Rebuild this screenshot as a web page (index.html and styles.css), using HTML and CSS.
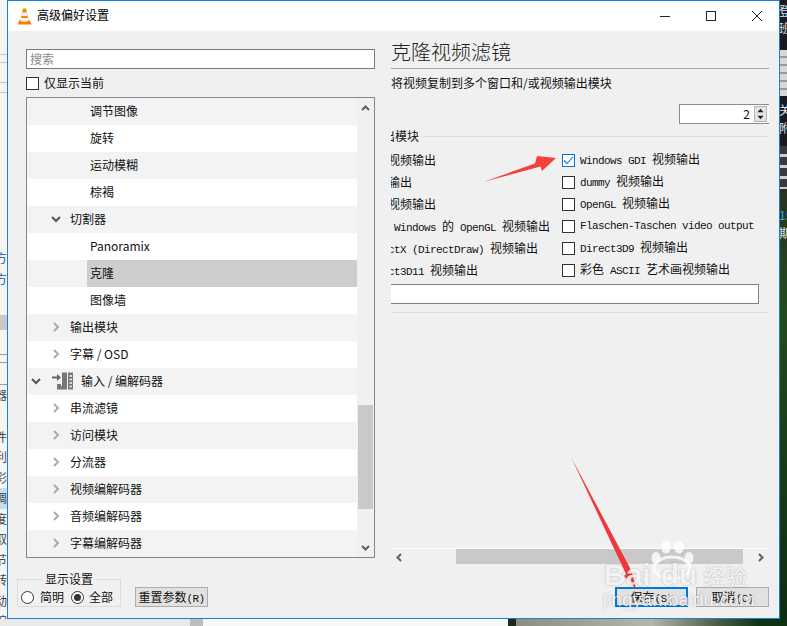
FILE: index.html
```html
<!DOCTYPE html>
<html lang="zh">
<head>
<meta charset="utf-8">
<title>高级偏好设置</title>
<link rel="stylesheet" href="styles.css">
</head>
<body>
<div class="desktop">
  <div class="strip-left">
    <div class="gap-54"></div><div class="hline"></div><div class="gap-7"></div><div class="hline"></div><div class="gap-19"></div><div class="hline"></div><div class="gap-9"></div><div class="hline"></div>
    <div class="gap-155"></div>
    <div class="bg-ch blue">方</div><div class="bg-ch blue">方</div>
    <div class="gap-26"></div>
    <div class="gray-block"></div>
    <div class="gap-24"></div><div class="hline dark"></div><div class="gap-7"></div><div class="hline dark"></div><div class="gap-21"></div><div class="hline dark"></div>
    <div class="bg-ch">器</div>
    <div class="gap-21"></div>
    <div class="bg-ch">件</div><div class="bg-ch">利</div><div class="bg-ch">彩</div><div class="bg-ch sel">调</div><div class="bg-ch">度</div><div class="bg-ch">取</div><div class="bg-ch">节</div><div class="bg-ch">转</div><div class="bg-ch">动</div><div class="bg-ch">编</div>
  </div>
  <div class="strip-right">
    <div class="sr-text">登<br>班</div>
    <div class="sr-bars"></div>
    <div class="sr-text sr-mid">关<br>附</div>
    <div class="sr-bars dark"></div>
    <div class="sr-green"><span class="sr-num">15</span><br>期</div>
  </div>
  <div class="strip-bottom">
    <div class="sb-a"></div><div class="sb-b"></div><div class="sb-c"></div><div class="sb-d"></div><div class="sb-e"></div>
  </div>

  <div class="window">
    <header class="titlebar">
      <svg class="cone" width="15" height="17" viewBox="0 0 15 17">
        <path d="M0.5 16.5 L2.5 12 H12.5 L14.5 16.5 Z" fill="#f08000"/>
        <path d="M6 0.5 H9 L11.8 13.5 Q7.5 15.5 3.2 13.5 Z" fill="#f28a00"/>
        <path d="M5.1 4.5 H9.9 L10.6 8 H4.4 Z" fill="#f4f4f4"/>
        <path d="M3.9 10 H11.1 L11.7 13 Q7.5 14.6 3.3 13 Z" fill="#f4f4f4"/>
      </svg>
      <span class="title-text">高级偏好设置</span>
      <div class="win-controls">
        <svg width="12" height="12" viewBox="0 0 12 12"><path d="M1 6.5 H11" stroke="#222" fill="none"/></svg>
        <svg width="12" height="12" viewBox="0 0 12 12"><rect x="1.5" y="1.5" width="9" height="9" stroke="#222" fill="none"/></svg>
        <svg width="12" height="12" viewBox="0 0 12 12"><path d="M1 1 L11 11 M11 1 L1 11" stroke="#222" fill="none"/></svg>
      </div>
    </header>

    <div class="body">
      <aside class="left">
        <div class="search">搜索</div>
        <label class="only-current"><span class="cb"></span><span class="oc-text">仅显示当前</span></label>
        <div class="tree">
          <div class="rows">
            <div class="row lvl3"><span class="lab">调节图像</span></div>
            <div class="row lvl3"><span class="lab">旋转</span></div>
            <div class="row lvl3"><span class="lab">运动模糊</span></div>
            <div class="row lvl3"><span class="lab">棕褐</span></div>
            <div class="row lvl2"><svg class="chev" width="10" height="10" viewBox="0 0 10 10"><path class="open" d="M1 3 L5 7 L9 3"/></svg><span>切割器</span></div>
            <div class="row lvl3"><span class="lab">Panoramix</span></div>
            <div class="row lvl3"><span class="lab selected">克隆</span></div>
            <div class="row lvl3"><span class="lab">图像墙</span></div>
            <div class="row lvl2"><svg class="chev" width="10" height="10" viewBox="0 0 10 10"><path d="M3 1 L7 5 L3 9"/></svg><span>输出模块</span></div>
            <div class="row lvl2"><svg class="chev" width="10" height="10" viewBox="0 0 10 10"><path d="M3 1 L7 5 L3 9"/></svg><span>字幕 / OSD</span></div>
            <div class="row lvl1">
              <svg class="chev" width="10" height="10" viewBox="0 0 10 10"><path class="open" d="M1 3 L5 7 L9 3"/></svg>
              <svg class="codec" width="21" height="18" viewBox="0 0 21 18">
                <path d="M0 4.5 H5 V2 L9 5.5 L5 9 V6.5 H0 Z" fill="#666"/>
                <path d="M10 0.5 H15 V17.5 H5 V12 H9 V14 H10 Z" fill="#777"/>
                <path d="M16 0.5 H21 V17.5 H16 Z" fill="#777"/>
                <path d="M17.5 4 H20 M17.5 7.5 H20 M17.5 11 H20 M17.5 14.5 H20" stroke="#f3f3f3" stroke-width="1.4" fill="none"/>
              </svg>
              <span>输入 / 编解码器</span>
            </div>
            <div class="row lvl2"><svg class="chev" width="10" height="10" viewBox="0 0 10 10"><path d="M3 1 L7 5 L3 9"/></svg><span>串流滤镜</span></div>
            <div class="row lvl2"><svg class="chev" width="10" height="10" viewBox="0 0 10 10"><path d="M3 1 L7 5 L3 9"/></svg><span>访问模块</span></div>
            <div class="row lvl2"><svg class="chev" width="10" height="10" viewBox="0 0 10 10"><path d="M3 1 L7 5 L3 9"/></svg><span>分流器</span></div>
            <div class="row lvl2"><svg class="chev" width="10" height="10" viewBox="0 0 10 10"><path d="M3 1 L7 5 L3 9"/></svg><span>视频编解码器</span></div>
            <div class="row lvl2"><svg class="chev" width="10" height="10" viewBox="0 0 10 10"><path d="M3 1 L7 5 L3 9"/></svg><span>音频编解码器</span></div>
            <div class="row lvl2"><svg class="chev" width="10" height="10" viewBox="0 0 10 10"><path d="M3 1 L7 5 L3 9"/></svg><span>字幕编解码器</span></div>
          </div>
          <div class="vscroll">
            <svg class="arrow-v" width="9" height="6" viewBox="0 0 9 6"><path d="M1 5 L4.5 1.5 L8 5"/></svg>
            <div class="vthumb"></div>
            <svg class="arrow-v" width="9" height="6" viewBox="0 0 9 6"><path d="M1 1 L4.5 4.5 L8 1"/></svg>
          </div>
        </div>
        <div class="left-foot">
          <div class="display-group">
            <span class="legend">显示设置</span>
            <span class="radio"></span><span class="r-lab">简明</span>
            <span class="radio on"></span><span class="r-lab">全部</span>
          </div>
          <button class="btn reset">重置参数<span class="lat">(R)</span></button>
        </div>
      </aside>

      <main class="right">
        <h1 class="panel-title">克隆视频滤镜</h1>
        <p class="desc">将视频复制到多个窗口和/或视频输出模块</p>
        <div class="spin-row">
          <div class="spin">
            <span class="spin-val">2</span>
            <div class="spin-btns">
              <svg width="13" height="8" viewBox="0 0 13 8"><path d="M6.5 2 L10 6 H3 Z" fill="#222"/></svg>
              <svg width="13" height="8" viewBox="0 0 13 8"><path d="M6.5 6 L10 2 H3 Z" fill="#222"/></svg>
            </div>
          </div>
        </div>
        <div class="group-head"><span class="group-name">输出模块</span><span class="group-line"></span></div>
        <div class="options">
          <div class="col-left">
            <div class="opt-l"><span class="lat">YUV </span>视频输出</div>
            <div class="opt-l">视频输出</div>
            <div class="opt-l"><span class="lat">XCB </span>视频输出</div>
            <div class="opt-l">使用<span class="lat"> Windows </span>的<span class="lat"> OpenGL </span>视频输出</div>
            <div class="opt-l"><span class="lat">DirectX (DirectDraw) </span>视频输出</div>
            <div class="opt-l"><span class="lat">Direct3D11 </span>视频输出</div>
          </div>
          <div class="col-right">
            <div class="opt-r"><span class="cb checked"><svg width="11" height="11" viewBox="0 0 11 11"><path d="M1 5.5 L4 8.5 L10 2" stroke="#0078d7" stroke-width="1.1" fill="none"/></svg></span><span><span class="lat">Windows GDI </span>视频输出</span></div>
            <div class="opt-r"><span class="cb"></span><span><span class="lat">dummy </span>视频输出</span></div>
            <div class="opt-r"><span class="cb"></span><span><span class="lat">OpenGL </span>视频输出</span></div>
            <div class="opt-r"><span class="cb"></span><span class="lat">Flaschen-Taschen video output</span></div>
            <div class="opt-r"><span class="cb"></span><span><span class="lat">Direct3D9 </span>视频输出</span></div>
            <div class="opt-r"><span class="cb"></span><span>彩色<span class="lat"> ASCII </span>艺术画视频输出</span></div>
          </div>
        </div>
        <div class="text-field"></div>
        <div class="rule"></div>
        <div class="spacer"></div>
        <div class="hscroll">
          <svg class="arrow-h" width="6" height="9" viewBox="0 0 6 9"><path d="M5 1 L1.5 4.5 L5 8"/></svg>
          <div class="hthumb"></div>
          <svg class="arrow-h" width="6" height="9" viewBox="0 0 6 9"><path d="M1 1 L4.5 4.5 L1 8"/></svg>
        </div>
        <div class="actions">
          <button class="btn primary">保存<span class="lat">(S)</span></button>
          <button class="btn">取消<span class="lat">(C)</span></button>
        </div>
      </main>
    </div>
  </div>

  <svg class="annot annot-1" width="80" height="34" viewBox="0 0 80 34">
    <path d="M0 29 L52 10.5 L54 3 L73 5 L59 18 L57.5 13.5 Z" fill="#f5413c"/>
  </svg>
  <svg class="annot annot-2" width="70" height="136" viewBox="0 0 70 136">
    <path d="M0.5 0 L58 108 L62 118 L65 131 L53 118 L55 116 Z" fill="#f0383c"/>
  </svg>

  <div class="watermark">
    <svg class="paw" width="44" height="40" viewBox="0 0 44 40">
      <ellipse cx="5" cy="17" rx="4.5" ry="6"/><ellipse cx="15" cy="6" rx="5" ry="6.5"/><ellipse cx="28" cy="6" rx="5" ry="6.5"/><ellipse cx="38" cy="17" rx="4.5" ry="6"/>
      <ellipse class="paw-pad" cx="21" cy="27" rx="18" ry="11"/>
    </svg>
    <div class="wm-logo"><span>Bai</span><span class="wm-du">du</span><span class="wm-cn">经验</span></div>
    <div class="wm-url">jingyan.baidu.com</div>
  </div>
</div>
</body>
</html>
```
FILE: styles.css
```css
* { box-sizing: border-box; }
html, body { margin: 0; padding: 0; }
body { font-family: "Noto Sans CJK SC", "Noto Sans", sans-serif; font-size: 12px; line-height: 16px; color: #111; }
.lat { font-family: "Liberation Mono", monospace; font-size: 11px; letter-spacing: -0.6px; white-space: pre; }

.desktop { position: relative; width: 787px; height: 626px; overflow: hidden; background: #f5f5f5; }

/* desktop leftovers around the dialog */
.strip-left { position: absolute; left: 0; top: 0; width: 7px; height: 626px; display: flex; flex-direction: column; overflow: hidden; }
.hline { height: 1px; background: #c4c4c4; flex: none; }
.hline.dark { background: #999; }
.gap-7 { height: 7px; flex: none; } .gap-9 { height: 9px; flex: none; }
.gap-19 { height: 19px; flex: none; } .gap-21 { height: 21px; flex: none; }
.gap-24 { height: 24px; flex: none; } .gap-26 { height: 26px; flex: none; } .gap-54 { height: 54px; flex: none; }
.gap-155 { height: 155px; flex: none; }
.gray-block { height: 15px; background: #c8c8c8; flex: none; }
.bg-ch { width: 12px; margin-left: -5px; height: 20.5px; line-height: 20px; font-size: 12px; color: #444; flex: none; white-space: nowrap; }
.bg-ch.blue { color: #1b4f9a; }
.bg-ch.sel { background: #c4dcf2; }

.strip-right { position: absolute; left: 779px; top: 0; width: 8px; height: 626px; display: flex; flex-direction: column; overflow: hidden; background: #1b1b1f; color: #dfe6ee; font-size: 12px; }
.sr-text { height: 50px; flex: none; padding-top: 2px; line-height: 17px; white-space: nowrap; }
.sr-mid { padding-top: 5px; line-height: 18px; }
.sr-bars { height: 46px; flex: none; background: repeating-linear-gradient(#d8d8d8 0 6px, #9b9b9b 6px 8px); }
.sr-bars.dark { height: 43px; background: repeating-linear-gradient(#3a3a3e 0 8px, #cfcfcf 8px 11px); }
.sr-green { flex: 1; padding-top: 17px; line-height: 18px; white-space: nowrap; background: linear-gradient(#28331f 0, #244a20 120px, #173a17 300px, #0d2c0f 100%); }
.sr-num { color: #4aa0e0; }

.strip-bottom { position: absolute; left: 0; top: 619px; width: 787px; height: 7px; display: flex; }
.sb-a { width: 190px; background: #e9e9e9; }
.sb-b { width: 13px; background: #bdbdbd; }
.sb-c { width: 305px; background: #f7f7f7; }
.sb-d { width: 8px; background: #1c2a1c; }
.sb-e { flex: 1; background: linear-gradient(90deg, #8d8d80 0, #b5b5a8 50%, #4a5a40 75%, #0f3312 90%); }

/* dialog */
.window { position: absolute; left: 7px; top: 0; width: 773px; height: 619px; border: 1px solid #1a7fd6; background: #f0f0f0; display: flex; flex-direction: column; }
.titlebar { height: 30px; flex: none; background: #fff; display: flex; align-items: center; padding-left: 9px; }
.cone { margin-right: 5px; }
.title-text { font-size: 12px; color: #000; padding-bottom: 2px; }
.win-controls { margin-left: auto; display: flex; gap: 34px; padding-right: 16px; }

.body { flex: 1; display: flex; min-height: 0; }
.left { width: 383px; flex: none; padding: 18px 16px 0 18px; display: flex; flex-direction: column; }
.search { height: 20px; flex: none; border: 1px solid #7a7a7a; background: #fff; color: #8a8a8a; padding-left: 3px; line-height: 18px; }
.only-current { display: flex; align-items: center; gap: 5px; height: 13px; margin-top: 8px; flex: none; line-height: 13px; }
.oc-text { padding-bottom: 2px; }
.cb { width: 13px; height: 13px; flex: none; border: 1px solid #333; background: #fff; display: flex; align-items: center; justify-content: center; }
.cb.checked { border-color: #0078d7; }

.tree { height: 461px; flex: none; margin-top: 7px; border: 1px solid #82878c; background: #fff; display: flex; }
.rows { width: 330px; flex: none; display: flex; flex-direction: column; }
.row { height: 27px; flex: none; display: flex; align-items: center; }
.row:nth-child(odd) { background: #f3f3f3; }
.lvl3 { padding-left: 60px; }
.lab { flex: 1; align-self: stretch; display: flex; align-items: center; padding: 0 0 2px 3px; }
.selected { background: #cdcdcd; }
.lvl2 { padding: 0 0 2px 24px; }
.lvl2 .chev { margin-right: 9px; }
.lvl1 { padding: 0 0 2px 4px; }
.chev { flex: none; }
.chev path { stroke: #aaa; stroke-width: 2; fill: none; }
.chev path.open { stroke: #555; }
.codec { margin-left: 11px; margin-right: 8px; flex: none; }

.vscroll { width: 17px; flex: none; background: #f0f0f0; position: relative; display: flex; flex-direction: column; align-items: center; justify-content: space-between; padding: 7px 0 6px; }
.arrow-v path, .arrow-h path { stroke: #606060; stroke-width: 2; fill: none; }
.vthumb { position: absolute; left: 1px; top: 307px; width: 15px; height: 104px; background: #c9c9c9; }

.left-foot { display: flex; align-items: flex-end; margin-top: 21px; margin-left: -9px; }
.display-group { position: relative; width: 104px; height: 28px; flex: none; border: 1px solid #dcdcdc; display: flex; align-items: center; padding: 8px 0 0 3px; }
.legend { position: absolute; left: 23px; top: -9px; padding: 0 4px; background: #f0f0f0; line-height: 16px; white-space: nowrap; }
.radio { width: 13px; height: 13px; flex: none; border: 1px solid #333; border-radius: 50%; background: #fff; position: relative; }
.radio.on::after { content: ""; position: absolute; left: 2px; top: 2px; width: 7px; height: 7px; border-radius: 50%; background: #333; }
.r-lab { flex: none; margin-left: 6px; margin-right: 7px; white-space: nowrap; }
.r-lab:last-child { margin-left: 5px; margin-right: 0; }

.btn { width: 73px; height: 20px; padding: 0; border: 1px solid #adadad; background: #e1e1e1; font-family: inherit; font-size: 12px; line-height: 18px; color: #111; white-space: nowrap; }
.btn.reset { margin-left: 14px; }
.btn.primary { border: 2px solid #0078d7; line-height: 16px; }

.right { flex: 1; min-width: 0; padding: 9px 10px 11px 0; display: flex; flex-direction: column; overflow: hidden; }
.panel-title { margin: 0; height: 29px; flex: none; font-size: 20px; font-weight: 300; line-height: 24px; color: #222; border-bottom: 1px solid #a8a8a8; }
.desc { margin: 6px 0 0; height: 16px; flex: none; }
.spin-row { display: flex; justify-content: flex-end; margin-top: 13px; flex: none; }
.spin { width: 90px; height: 20px; background: #fff; border-style: solid; border-color: #8c8c8c; border-width: 1px 0 1px 1px; display: flex; align-items: center; justify-content: flex-end; padding-right: 2px; }
.spin-val { font-size: 12px; margin-right: 4px; }
.spin-btns { width: 13px; height: 16px; background: #e4e4e4; border: 1px solid #b4b4b4; display: flex; flex-direction: column; align-items: center; justify-content: center; overflow: hidden; }
.spin-btns svg { flex: none; height: 7px; }
.group-head { display: flex; align-items: center; height: 16px; margin-top: 4px; flex: none; overflow: hidden; }
.group-name { margin-left: -20px; flex: none; }
.group-line { flex: 1; height: 1px; background: #dcdcdc; margin-left: 4px; }
.options { display: flex; margin-top: 5px; flex: none; }
.col-left { width: 171px; flex: none; overflow: hidden; }
.opt-l { height: 22px; line-height: 22px; margin-left: -27px; white-space: nowrap; }
.col-right { flex: 1; min-width: 0; }
.opt-r { height: 22px; line-height: 22px; display: flex; align-items: center; gap: 5px; white-space: nowrap; }
.text-field { width: 368px; height: 20px; margin-top: 3px; flex: none; background: #fff; border: 1px solid #808080; border-left: 0; }
.rule { height: 1px; margin-top: 8px; flex: none; background: #dcdcdc; }
.spacer { flex: 1; }
.hscroll { position: relative; height: 17px; flex: none; border-top: 1px solid #fff; display: flex; align-items: center; justify-content: space-between; padding: 0 5px; }
.hthumb { position: absolute; left: 65px; top: 0; width: 287px; height: 15px; background: #c9c9c9; }
.actions { display: flex; justify-content: flex-end; gap: 8px; margin-top: 22px; flex: none; }

/* screenshot annotations on top */
.annot { position: absolute; }
.annot-1 { left: 483px; top: 153px; }
.annot-2 { left: 571px; top: 458px; }
.watermark { position: absolute; left: 600px; top: 540px; width: 175px; height: 70px; color: rgba(255,255,255,0.85); text-shadow: 0 0 2px rgba(0,0,0,0.3); pointer-events: none; }
.paw { position: absolute; left: 51px; top: 1px; fill: rgba(255,255,255,0.8); }
.paw-pad { fill: none; stroke: rgba(255,255,255,0.8); stroke-width: 3; }
.wm-logo { position: absolute; left: 4px; top: 18px; display: flex; align-items: baseline; font-family: "Liberation Sans", sans-serif; font-weight: 700; font-size: 30px; line-height: 34px; }
.wm-du { margin-left: 10px; }
.wm-cn { margin-left: 6px; font-family: "Noto Sans CJK SC", sans-serif; font-size: 22px; font-weight: 400; }
.wm-url { position: absolute; left: 3px; top: 50px; font-family: "Liberation Sans", sans-serif; font-size: 18px; line-height: 20px; letter-spacing: 0.4px; white-space: nowrap; }
```
